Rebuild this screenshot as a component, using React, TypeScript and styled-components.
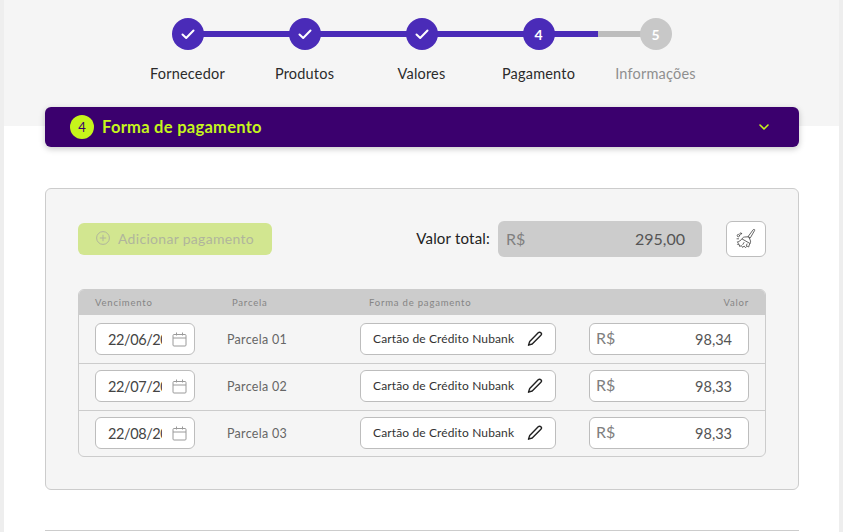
import { createGlobalStyle } from "styled-components";
import styled from "styled-components";

const GlobalStyle = createGlobalStyle`
    html, body {
        margin: 0;
        padding: 0;
        height: 100%;
        overflow: hidden;
        background: #eeeeee;
        font-family: "Lato", "Noto Sans", sans-serif;
    }
    * {
        box-sizing: border-box;
    }
`;

const Page = styled.div`
    width: 835px;
    height: 532px;
    margin: 0 4px;
    background: #ffffff;
    overflow: hidden;
`;

const TopBand = styled.div`
    height: 126px;
    background: #f5f5f5;
    padding-top: 18px;
`;

const Stepper = styled.ol`
    display: grid;
    grid-template-columns: repeat(5, 117px);
    justify-content: center;
    list-style: none;
    margin: 0;
    padding: 0;
`;

const Step = styled.li`
    display: flex;
    flex-direction: column;
    align-items: center;
    position: relative;
`;

const Connector = styled.span<{ $split?: boolean }>`
    position: absolute;
    top: 13px;
    left: 50%;
    width: 100%;
    height: 6px;
    background: ${(p) => (p.$split ? "linear-gradient(90deg, #4a2bb8 50.4%, #bdbdbd 50.4%)" : "#4a2bb8")};
`;

const Circle = styled.span<{ $off?: boolean }>`
    position: relative;
    width: 32px;
    height: 32px;
    border-radius: 50%;
    display: flex;
    align-items: center;
    justify-content: center;
    font-size: 14px;
    font-weight: 700;
    color: #ffffff;
    background: ${(p) => (p.$off ? "#c8c8c8" : "#4a2bb8")};
`;

const StepLabel = styled.span<{ $off?: boolean }>`
    margin-top: 15px;
    font-size: 14.5px;
    line-height: 18px;
    white-space: nowrap;
    letter-spacing: 0.2px;
    color: ${(p) => (p.$off ? "#8f8f8f" : "#2b2b2b")};
`;

const Content = styled.div`
    padding: 0 40px 0 41px;
`;

const Accordion = styled.div`
    margin-top: -19px;
    position: relative;
    height: 40px;
    background: #3b006e;
    border-radius: 6px;
    box-shadow: 0 2px 6px rgba(0, 0, 0, 0.22);
    display: flex;
    align-items: center;
    padding: 0 29px 0 25px;
    gap: 8px;
`;

const Badge = styled.span`
    width: 24px;
    height: 24px;
    border-radius: 50%;
    background: #c6f51b;
    color: #3b006e;
    font-size: 13px;
    display: flex;
    align-items: center;
    justify-content: center;
`;

const AccordionTitle = styled.span`
    flex: 1;
    color: #c6f51b;
    font-size: 16.5px;
    font-weight: 700;
    letter-spacing: 0.28px;
    padding-bottom: 1px;
`;

const Panel = styled.section`
    margin-top: 41px;
    height: 302px;
    background: #f5f5f5;
    border: 1px solid #cccccc;
    border-radius: 6px;
    padding: 32px 32px 0;
`;

const Toolbar = styled.div`
    display: flex;
    align-items: center;
    height: 36px;
`;

const AddButton = styled.button`
    width: 194px;
    height: 32px;
    border: none;
    border-radius: 6px;
    background: #d2e690;
    color: #b0b59c;
    font-family: inherit;
    font-size: 14px;
    letter-spacing: 0.3px;
    display: flex;
    align-items: center;
    gap: 8px;
    padding: 0 18px 2px;
`;

const TotalLabel = styled.span`
    margin-left: auto;
    padding-bottom: 2px;
    font-size: 15px;
    letter-spacing: 0.2px;
    color: #222222;
`;

const TotalBox = styled.div`
    margin-left: 8px;
    width: 204px;
    height: 36px;
    background: #cccccc;
    border-radius: 6px;
    display: flex;
    align-items: center;
    justify-content: space-between;
    padding: 0 17px 2px 8px;
    font-size: 16px;
    color: #555555;
`;

const Currency = styled.span`
    color: #808080;
    font-size: 16px;
`;

const ClearButton = styled.button`
    margin-left: 24px;
    width: 40px;
    height: 36px;
    background: #ffffff;
    border: 1px solid #bdbdbd;
    border-radius: 6px;
    padding: 0;
    display: flex;
    align-items: center;
    justify-content: center;
`;

const Table = styled.div`
    margin-top: 32px;
    border: 1px solid #cccccc;
    border-radius: 6px;
    overflow: hidden;
`;

const HeadRow = styled.div`
    height: 25px;
    background: #cccccc;
    display: grid;
    grid-template-columns: 137px 137px 1fr auto;
    align-items: center;
    padding: 0 16px;
    font-size: 9.5px;
    letter-spacing: 0.8px;
    color: #858585;
`;

const Row = styled.div`
    display: grid;
    grid-template-columns: 132px 133px 229px 160px;
    align-items: center;
    padding: 6px 16px 8px;
    border-top: 1px solid #cccccc;

    ${HeadRow} + & {
        border-top: none;
        padding-top: 8px;
    }

    &:last-child {
        padding-bottom: 7px;
    }
`;

const Field = styled.div`
    height: 32px;
    background: #ffffff;
    border: 1px solid #bdbdbd;
    border-radius: 6px;
    display: flex;
    align-items: center;
`;

const DateField = styled(Field)`
    width: 100px;
    padding: 0 7px 0 12px;
    justify-content: space-between;
`;

const DateText = styled.span`
    width: 54px;
    overflow: hidden;
    white-space: nowrap;
    font-size: 14.5px;
    letter-spacing: -0.4px;
    color: #444444;
`;

const ParcelaText = styled.span`
    font-size: 12.5px;
    letter-spacing: 0.3px;
    color: #666666;
`;

const MethodField = styled(Field)`
    width: 196px;
    padding: 0 12px 1px;
    justify-content: space-between;
    font-size: 12px;
    letter-spacing: 0.13px;
    color: #333333;
    white-space: nowrap;
`;

const ValueField = styled(Field)`
    width: 160px;
    padding: 0 16px 0 6px;
    justify-content: space-between;
    font-size: 14.5px;
    color: #555555;

    ${Currency} {
        margin-top: -3px;
    }
`;

const BottomRule = styled.hr`
    margin: 40px 0 0;
    border: none;
    border-top: 1px solid #cccccc;
`;

const CheckIcon = () => (
    <svg width={16} height={16} viewBox="0 0 16 16" fill="none" stroke="#ffffff" strokeWidth="2" strokeLinecap="round" strokeLinejoin="round">
        <path d="M2.5 8.5 6.2 12 13.5 4.5" />
    </svg>
);

const ChevronIcon = () => (
    <svg width={12} height={12} viewBox="0 0 12 12" fill="none" stroke="#c6f51b" strokeWidth="1.6" strokeLinecap="round" strokeLinejoin="round">
        <path d="M2 4 6 8 10 4" />
    </svg>
);

const PlusIcon = () => (
    <svg width={14} height={14} viewBox="0 0 14 14" fill="none" stroke="#b0b59c" strokeWidth="1">
        <circle cx="7" cy="7" r="6.4" />
        <path d="M7 3.8v6.4M3.8 7h6.4" />
    </svg>
);

const CalendarIcon = () => (
    <svg width={15} height={15} viewBox="0 0 15 15" fill="none" stroke="#9a9a9a" strokeWidth="1">
        <rect x="1" y="2.5" width="13" height="11.5" rx="1" />
        <path d="M1 6h13M4.5 0.5v3M10.5 0.5v3" />
    </svg>
);

const PencilIcon = () => (
    <svg width={16} height={16} viewBox="0 0 16 16" fill="none" stroke="#222222" strokeWidth="1.4" strokeLinecap="round" strokeLinejoin="round">
        <path d="M11.2 1.8c.8-.8 2-.8 2.7 0 .7.7.7 1.8 0 2.5L5.2 13l-3.7 1.2L2.7 10.5z" />
    </svg>
);

const BroomIcon = () => (
    <svg width={22} height={22} viewBox="0 0 22 22" fill="none" stroke="#555555" strokeWidth="0.9" strokeLinecap="round" strokeLinejoin="round">
        <path d="M18.6 1.4c.6-.4 1.4.2 1.1.9l-4.4 7.6-1.9-1.1z" />
        <path d="M13.3 8.8 9.6 9c-1.2.1-2.1.8-2.6 1.9l8 4.6c.7-1 .8-2.1.3-3.2z" />
        <path d="M7 10.9c-1.3 1.6-2.7 2.6-4.7 3l1.2 1.3-1 1.2 2 .4.1 1.6 2-.7.9 1.7 1.7-1.3 1.3 1.6 1.6-1.6 1.6.9c.3-1.4.6-2.7 1.3-3.5" />
        <circle cx="3.4" cy="7.6" r="1.2" />
        <circle cx="5.8" cy="5.6" r=".8" />
        <path d="M2 10.8h1.6M9 14.5l-1.2 2M12 16l-.6 1.6" />
    </svg>
);

const steps = ["Fornecedor", "Produtos", "Valores", "Pagamento", "Informações"];

const parcels = [
    { date: "22/06/2022", name: "Parcela 01", value: "98,34" },
    { date: "22/07/2022", name: "Parcela 02", value: "98,33" },
    { date: "22/08/2022", name: "Parcela 03", value: "98,33" },
];

export default function App() {
    return (
        <Page>
            <GlobalStyle />
            <TopBand>
                <Stepper>
                    {steps.map((label, i) => (
                        <Step key={label}>
                            {i < 4 && <Connector $split={i === 3} />}
                            <Circle $off={i === 4}>{i < 3 ? <CheckIcon /> : i + 1}</Circle>
                            <StepLabel $off={i === 4}>{label}</StepLabel>
                        </Step>
                    ))}
                </Stepper>
            </TopBand>
            <Content>
                <Accordion>
                    <Badge>4</Badge>
                    <AccordionTitle>Forma de pagamento</AccordionTitle>
                    <ChevronIcon />
                </Accordion>
                <Panel>
                    <Toolbar>
                        <AddButton>
                            <PlusIcon />
                            Adicionar pagamento
                        </AddButton>
                        <TotalLabel>Valor total:</TotalLabel>
                        <TotalBox>
                            <Currency>R$</Currency>
                            295,00
                        </TotalBox>
                        <ClearButton>
                            <BroomIcon />
                        </ClearButton>
                    </Toolbar>
                    <Table>
                        <HeadRow>
                            <span>Vencimento</span>
                            <span>Parcela</span>
                            <span>Forma de pagamento</span>
                            <span>Valor</span>
                        </HeadRow>
                        {parcels.map((p) => (
                            <Row key={p.name}>
                                <DateField>
                                    <DateText>{p.date}</DateText>
                                    <CalendarIcon />
                                </DateField>
                                <ParcelaText>{p.name}</ParcelaText>
                                <MethodField>
                                    Cartão de Crédito Nubank
                                    <PencilIcon />
                                </MethodField>
                                <ValueField>
                                    <Currency>R$</Currency>
                                    {p.value}
                                </ValueField>
                            </Row>
                        ))}
                    </Table>
                </Panel>
                <BottomRule />
            </Content>
        </Page>
    );
}
